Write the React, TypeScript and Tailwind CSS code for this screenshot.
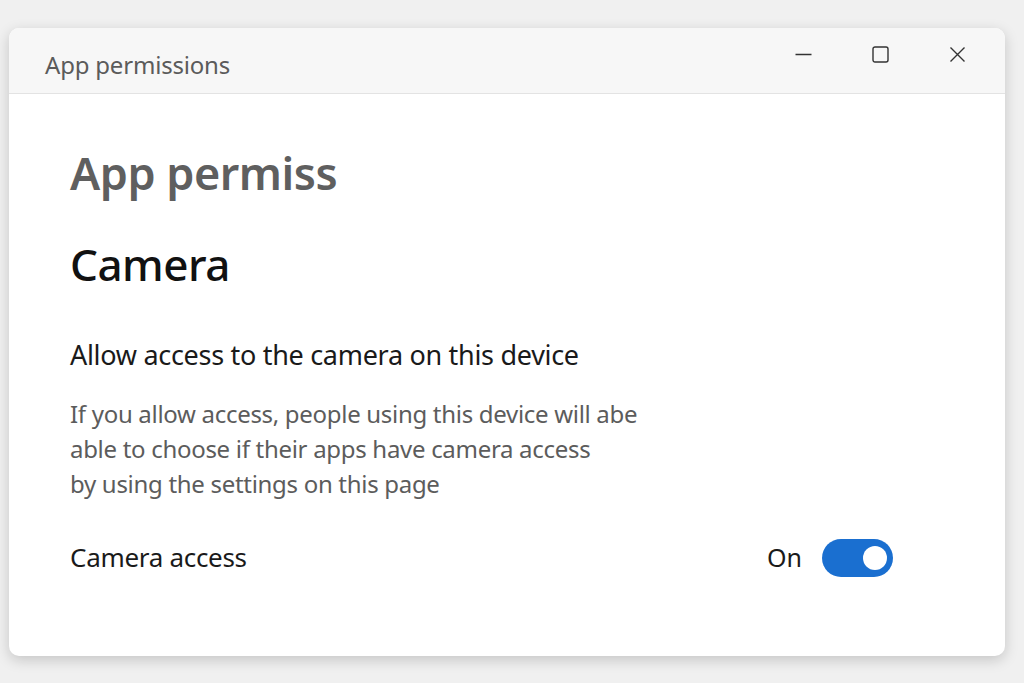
import React from "react";

export default function App() {
  return (
    <div
      className="w-[1024px] h-[683px] bg-[#f0f0f0] pt-[28px] pl-[9px] overflow-hidden"
      style={{ fontFamily: '"Noto Sans", "Open Sans", sans-serif' }}
    >
      <div className="w-[996px] h-[628px] rounded-[10px] bg-white shadow-[0_4px_14px_rgba(0,0,0,0.18)] overflow-hidden flex flex-col">
        <div className="h-[66px] bg-[#f7f7f7] border-b border-[#e3e3e3] flex justify-between pl-[36px]">
          <div className="text-[24px] text-[#5b5b5b] mt-[25px] leading-none tracking-[-0.2px]">App permissions</div>
          <div className="flex items-start pt-[18px]">
            <div className="w-[77px] flex justify-center">
              <svg width="17" height="17" viewBox="0 0 17 17">
                <line x1="0.5" y1="8.5" x2="16.5" y2="8.5" stroke="#333" strokeWidth="1.4" />
              </svg>
            </div>
            <div className="w-[77px] flex justify-center">
              <svg width="17" height="17" viewBox="0 0 17 17">
                <rect x="1" y="1" width="15" height="15" rx="2" fill="none" stroke="#333" strokeWidth="1.4" />
              </svg>
            </div>
            <div className="w-[77px] mr-[9px] flex justify-center">
              <svg width="17" height="17" viewBox="0 0 17 17">
                <path d="M1.5 1.5 L15.5 15.5 M15.5 1.5 L1.5 15.5" stroke="#333" strokeWidth="1.4" />
              </svg>
            </div>
          </div>
        </div>
        <div className="flex-1 pl-[61px] pr-[112px]">
          <div className="text-[45px] font-semibold text-[#5f5f5f] leading-none mt-[56px] tracking-[-0.5px]">App permiss</div>
          <div className="text-[44px] font-medium text-[#111] leading-none mt-[47px] tracking-[-0.5px]">Camera</div>
          <div className="text-[27px] text-[#1a1a1a] leading-none mt-[55px] tracking-[-0.3px]">Allow access to the camera on this device</div>
          <div className="text-[24px] text-[#5c5c5c] leading-[35px] mt-[28px] tracking-[-0.3px]">
            If you allow access, people using this device will abe
            <br />
            able to choose if their apps have camera access
            <br />
            by using the settings on this page
          </div>
          <div className="flex items-center justify-between mt-[37px]">
            <div className="text-[26px] text-[#1a1a1a] tracking-[-0.3px]">Camera access</div>
            <div className="flex items-center gap-[20px]">
              <div className="text-[25px] text-[#1a1a1a]">On</div>
              <div className="w-[71px] h-[38px] rounded-full bg-[#1a6fd0] flex items-center justify-end pr-[6px]">
                <div className="w-[24px] h-[24px] rounded-full bg-white" />
              </div>
            </div>
          </div>
        </div>
      </div>
    </div>
  );
}
